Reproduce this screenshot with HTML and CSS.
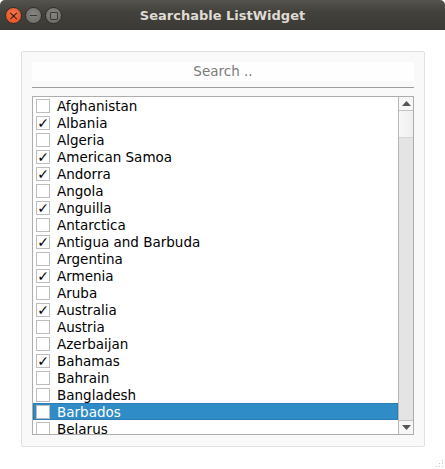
FILE: index.html
```html
<!DOCTYPE html>
<html>
<head>
<meta charset="utf-8">
<link rel="stylesheet" href="styles.css">
</head>
<body>
<div class="window">
  <div class="titlebar">
    <div class="controls">
      <span class="btn close">×</span>
      <span class="btn min"><span class="dash"></span></span>
      <span class="btn max"><span class="sq"></span></span>
    </div>
    <div class="title">Searchable ListWidget</div>
  </div>
  <div class="content">
    <div class="group">
      <div class="search">Search ..</div>
      <div class="underline"></div>
      <div class="list">
        <div class="rows">
          <div class="row"><span class="cb"></span><span class="label">Afghanistan</span></div>
          <div class="row"><span class="cb">✓</span><span class="label">Albania</span></div>
          <div class="row"><span class="cb"></span><span class="label">Algeria</span></div>
          <div class="row"><span class="cb">✓</span><span class="label">American Samoa</span></div>
          <div class="row"><span class="cb">✓</span><span class="label">Andorra</span></div>
          <div class="row"><span class="cb"></span><span class="label">Angola</span></div>
          <div class="row"><span class="cb">✓</span><span class="label">Anguilla</span></div>
          <div class="row"><span class="cb"></span><span class="label">Antarctica</span></div>
          <div class="row"><span class="cb">✓</span><span class="label">Antigua and Barbuda</span></div>
          <div class="row"><span class="cb"></span><span class="label">Argentina</span></div>
          <div class="row"><span class="cb">✓</span><span class="label">Armenia</span></div>
          <div class="row"><span class="cb"></span><span class="label">Aruba</span></div>
          <div class="row"><span class="cb">✓</span><span class="label">Australia</span></div>
          <div class="row"><span class="cb"></span><span class="label">Austria</span></div>
          <div class="row"><span class="cb"></span><span class="label">Azerbaijan</span></div>
          <div class="row"><span class="cb">✓</span><span class="label">Bahamas</span></div>
          <div class="row"><span class="cb"></span><span class="label">Bahrain</span></div>
          <div class="row"><span class="cb"></span><span class="label">Bangladesh</span></div>
          <div class="row selected"><span class="cb"></span><span class="label">Barbados</span></div>
          <div class="row"><span class="cb"></span><span class="label">Belarus</span></div>
        </div>
        <div class="scrollbar">
          <div class="arrow up"><svg width="9" height="5" viewBox="0 0 9 5"><path d="M0 5 L4.5 0 L9 5 Z" fill="#555"/></svg></div>
          <div class="thumb"></div>
          <div class="track"></div>
          <div class="arrow down"><svg width="9" height="5" viewBox="0 0 9 5"><path d="M0 0 L4.5 5 L9 0 Z" fill="#555"/></svg></div>
        </div>
      </div>
    </div>
  </div>
  <div class="grip">
    <svg width="12" height="12" viewBox="0 0 12 12">
      <g fill="#c4c4c4">
        <rect x="10" y="1" width="1" height="1"/>
        <rect x="7" y="4" width="1" height="1"/><rect x="10" y="4" width="1" height="1"/>
        <rect x="4" y="7" width="1" height="1"/><rect x="7" y="7" width="1" height="1"/><rect x="10" y="7" width="1" height="1"/>
        <rect x="1" y="10" width="1" height="1"/><rect x="4" y="10" width="1" height="1"/><rect x="7" y="10" width="1" height="1"/><rect x="10" y="10" width="1" height="1"/>
      </g>
    </svg>
  </div>
</div>
</body>
</html>
```
FILE: styles.css
```css
html, body {
  margin: 0;
  padding: 0;
  background: #ffffff;
}
.window {
  width: 445px;
  height: 469px;
  background: #ffffff;
  position: relative;
  font-family: "DejaVu Sans", sans-serif;
  overflow: hidden;
}
.titlebar {
  height: 30px;
  background: linear-gradient(#55534e, #43413c 40%, #3b3a36);
  border-radius: 5px 5px 0 0;
  position: relative;
  display: flex;
  align-items: center;
  justify-content: center;
}
.controls {
  position: absolute;
  left: 5px;
  top: 7px;
  display: flex;
  gap: 3px;
}
.btn {
  width: 17px;
  height: 17px;
  border-radius: 50%;
  box-sizing: border-box;
  display: flex;
  align-items: center;
  justify-content: center;
}
.close {
  background: radial-gradient(circle at 50% 40%, #f47a52, #e2461a);
  border: 1px solid #2f2e2b;
  color: #3a1a0c;
  font-size: 13px;
  line-height: 1;
  font-family: "DejaVu Sans", sans-serif;
}
.min, .max {
  background: radial-gradient(circle at 50% 40%, #87857f, #6a6863);
  border: 1px solid #2f2e2b;
}
.dash {
  width: 7px;
  height: 1.5px;
  background: #3a3935;
}
.sq {
  width: 6px;
  height: 6px;
  border: 1px solid #3a3935;
  border-radius: 1px;
}
.title {
  color: #dfdbd2;
  font-weight: bold;
  font-size: 13px;
  letter-spacing: 0;
}
.content {
  padding: 21px 0 0 21px;
}
.group {
  width: 404px;
  height: 396px;
  box-sizing: border-box;
  border: 1px solid #e1e1e1;
  border-radius: 2px;
  background: #f9f9f9;
  padding: 10px 10px 0 10px;
}
.search {
  height: 19px;
  background: #fefefe;
  color: #7a7a7a;
  font-size: 13.5px;
  line-height: 19px;
  text-align: center;
}
.underline {
  margin-top: 6px;
  height: 1px;
  background: #9d9d9d;
}
.list {
  margin-top: 8px;
  height: 339px;
  box-sizing: border-box;
  border: 1px solid #adadad;
  background: #ffffff;
  display: flex;
  overflow: hidden;
}
.rows {
  flex: 1;
  overflow: hidden;
}
.row {
  height: 17px;
  display: flex;
  align-items: center;
  padding-left: 3px;
  font-size: 13.5px;
  color: #000;
  box-sizing: border-box;
}
.row.selected {
  background: #308cc6;
  color: #ffffff;
  box-shadow: inset 0 0 0 1px #2b7db3;
}
.cb {
  width: 14px;
  height: 14px;
  box-sizing: border-box;
  border: 1px solid #bdbdbd;
  background: #fff;
  color: #000;
  font-size: 14px;
  line-height: 12px;
  text-align: center;
  margin-right: 7px;
  flex: none;
}
.label {
  white-space: nowrap;
}
.scrollbar {
  width: 15px;
  box-sizing: border-box;
  border-left: 1px solid #b6b6b6;
  display: flex;
  flex-direction: column;
  background: #e4e4e4;
}
.arrow {
  height: 13px;
  background: #f6f6f6;
  display: flex;
  align-items: center;
  justify-content: center;
  flex: none;
}
.arrow.up {
  border-bottom: 1px solid #c4c4c4;
}
.arrow.down {
  border-top: 1px solid #c4c4c4;
}
.thumb {
  height: 27px;
  background: linear-gradient(90deg, #f7f7f7, #efefef);
  border-bottom: 1px solid #d6d6d6;
  box-sizing: border-box;
  flex: none;
}
.track {
  flex: 1;
}
.grip {
  position: absolute;
  right: 1px;
  bottom: 1px;
  width: 12px;
  height: 12px;
}
```
